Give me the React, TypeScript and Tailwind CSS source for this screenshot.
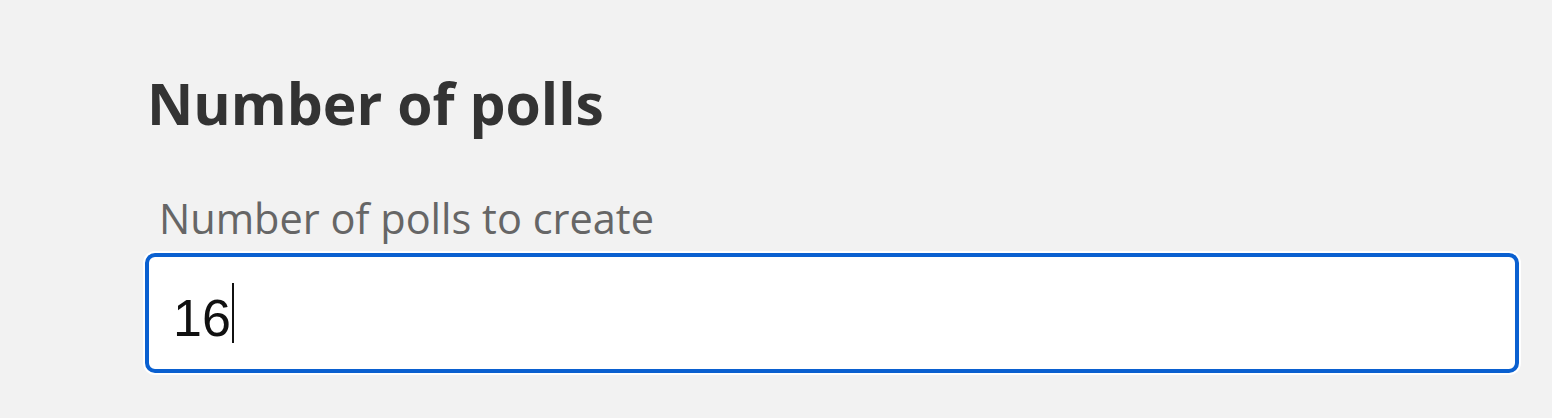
export default function App() {
  return (
    <div className="w-[1552px] h-[418px] bg-[#f2f2f2] pl-[145px] pr-[33px] pt-[69px]">
      <h1 className="text-[#333333] font-bold text-[57px] leading-[68px] pl-[2px]" style={{ fontFamily: '"Open Sans", sans-serif' }}>
        Number of polls
      </h1>
      <div className="mt-[56px] pl-[14px] text-[#666666] text-[41.5px] leading-[50px]" style={{ fontFamily: '"Open Sans", sans-serif' }}>
        Number of polls to create
      </div>
      <div className="mt-[10px] h-[120px] rounded-[10px] border-[4px] border-[#0a60d0] bg-white shadow-[0_0_0_2px_#ffffff] flex items-center pl-[24px]">
        <span className="text-[#111111] text-[52px] leading-none mt-[10px]" style={{ fontFamily: '"Liberation Sans", Arial, sans-serif' }}>16</span>
        <span className="w-[2px] h-[60px] bg-[#111111] ml-[1px]" />
      </div>
    </div>
  );
}
